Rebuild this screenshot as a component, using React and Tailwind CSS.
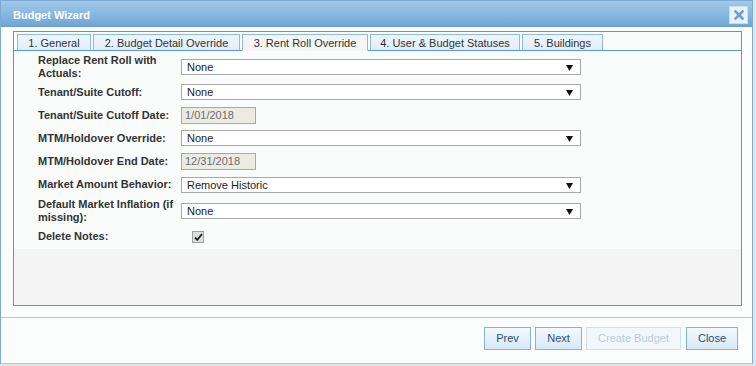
import React from 'react';

// Budget wizard dialog, tab 3 (Rent Roll Override)

const tabs = [
  { label: '1. General', w: 'w-[74px]' },
  { label: '2. Budget Detail Override', w: 'w-[147px]' },
  { label: '3. Rent Roll Override', w: 'w-[126px]', active: true },
  { label: '4. User & Budget Statuses', w: 'w-[150px]' },
  { label: '5. Buildings', w: 'w-[81px]' },
];

function Arrow() {
  return (
    <svg width="7" height="6" viewBox="0 0 7 6" className="absolute right-[7px] top-[5px]">
      <polygon points="0,0 7,0 3.5,6" fill="#111" />
    </svg>
  );
}

function Select({ value }) {
  return (
    <div className="relative w-[400px] h-[16px] border border-[#a9a9a9] bg-white text-[11px] leading-[14px] pl-[5px] text-[#222]">
      {value}
      <Arrow />
    </div>
  );
}

function DateBox({ value }) {
  return (
    <div className="w-[75px] h-[17px] border border-[#a9a9a9] bg-[#ebebe4] text-[11px] leading-[15px] pl-[3px] text-[#6d6d6d]">
      {value}
    </div>
  );
}

function Row({ h, label, children }) {
  return (
    <div className={`flex items-center ${h}`}>
      <div className="w-[139px] mr-[4px] text-[11px] leading-[13px] font-bold text-[#333]">{label}</div>
      {children}
    </div>
  );
}

function Btn({ children, w, disabled }) {
  return (
    <button
      className={`${w} h-[23px] border text-[11px] ${
        disabled
          ? 'border-[#cfe0ef] bg-[#f2f7fc] text-[#b9cadb]'
          : 'border-[#7fb3e0] bg-gradient-to-b from-[#f3f9fe] to-[#d7e9f8] text-[#2a4f75]'
      }`}
    >
      {children}
    </button>
  );
}

export default function App() {
  return (
    <div className="w-[756px] h-[366px] bg-[#e4e4e4] font-['Liberation_Sans',Arial,sans-serif] overflow-hidden">
      <div className="w-[753px] h-[364px] border border-[#7eabd6] border-b-[#b6c9da] bg-[#fbfdfd] flex flex-col">
        <div className="h-[26px] pt-[3px] border-b border-[#6a9fd0] bg-gradient-to-b from-[#a0c8e9] via-[#8ab9e0] to-[#6fa5d6] flex items-center justify-between pl-[12px] pr-[4px]">
          <span className="text-white text-[11px] font-bold">Budget Wizard</span>
          <div className="w-[19px] h-[18px] bg-[#eaf3fb] border border-[#c7dcef] flex items-center justify-center">
            <svg width="10" height="10" viewBox="0 0 10 10">
              <path d="M1.5 1.5 L8.5 8.5 M8.5 1.5 L1.5 8.5" stroke="#6c9fcf" strokeWidth="2.6" strokeLinecap="square" />
            </svg>
          </div>
        </div>

        <div className="pt-[4px] pl-[12px]">
          <div className="w-[729px] h-[275px] border border-[#5b94d5] flex flex-col">
            <div className="bg-[#fafcfc] flex gap-[2px] pl-[3px] pt-[2px] border-b border-[#5b94d5]">
              {tabs.map((t) => (
                <div
                  key={t.label}
                  className={`${t.w} h-[17px] pt-[1px] -mb-px border border-[#8dbbe6] text-[11px] leading-[15px] text-center text-[#333] ${
                    t.active ? 'bg-[#f5f5f5] border-b-[#f5f5f5]' : 'bg-gradient-to-b from-[#eef6fd] to-[#e0eefa] border-b-[#5b94d5]'
                  }`}
                >
                  {t.label}
                </div>
              ))}
            </div>

            <div className="bg-[#fafcfc] h-[198px] pt-[3px] pl-[24px]">
              <Row h="h-[26px]" label={<>Replace Rent Roll with<br />Actuals:</>}>
                <Select value="None" />
              </Row>
              <Row h="h-[24px]" label="Tenant/Suite Cutoff:">
                <Select value="None" />
              </Row>
              <Row h="h-[22px]" label="Tenant/Suite Cutoff Date:">
                <DateBox value="1/01/2018" />
              </Row>
              <Row h="h-[24px]" label="MTM/Holdover Override:">
                <Select value="None" />
              </Row>
              <Row h="h-[22px]" label="MTM/Holdover End Date:">
                <DateBox value="12/31/2018" />
              </Row>
              <Row h="h-[25px]" label="Market Amount Behavior:">
                <Select value="Remove Historic" />
              </Row>
              <Row h="h-[27px]" label={<>Default Market Inflation (if<br />missing):</>}>
                <Select value="None" />
              </Row>
              <Row h="h-[25px]" label="Delete Notes:">
                <div className="ml-[11px] w-[12px] h-[12px] border border-[#a0a0a0] bg-[#dedede] flex items-center justify-center">
                  <svg width="9" height="8" viewBox="0 0 9 8">
                    <path d="M1 4.5 L3.3 6.8 L8 1.2" stroke="#222" strokeWidth="1.8" fill="none" />
                  </svg>
                </div>
              </Row>
            </div>

            <div className="flex-1 bg-[#f4f4f4]" />
          </div>
        </div>

        <div className="mt-[11px] border-t border-[#a6cbe8] flex justify-end items-start pt-[9px] pr-[14px]">
          <Btn w="w-[47px]">Prev</Btn>
          <div className="w-[4px]" />
          <Btn w="w-[47px]">Next</Btn>
          <div className="w-[4px]" />
          <Btn w="w-[95px]" disabled>Create Budget</Btn>
          <div className="w-[5px]" />
          <Btn w="w-[52px]">Close</Btn>
        </div>
      </div>
    </div>
  );
}
